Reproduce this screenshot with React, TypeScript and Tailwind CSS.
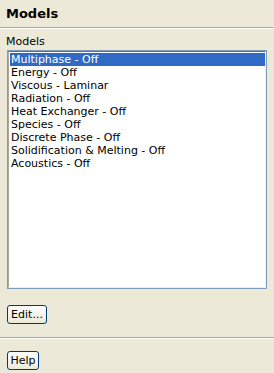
const models = [
  "Multiphase - Off",
  "Energy - Off",
  "Viscous - Laminar",
  "Radiation - Off",
  "Heat Exchanger - Off",
  "Species - Off",
  "Discrete Phase - Off",
  "Solidification & Melting - Off",
  "Acoustics - Off",
];

const XpButton = ({ label, width }: { label: string; width: string }) => (
  <button
    className={`${width} h-[19px] rounded-[3px] border border-[#003c74] bg-gradient-to-b from-white to-[#ece9d8] text-[11px] leading-none text-black`}
  >
    {label}
  </button>
);

export default function App() {
  return (
    <div className="flex h-[373px] w-[274px] flex-col bg-[#ece9d8] font-['Tahoma','DejaVu_Sans',sans-serif] text-black">
      <div className="flex h-[27px] items-center px-[6px] pt-[1px] text-[13px] font-bold">
        Models
      </div>
      <div className="mr-[1px] h-px bg-[#aca899]" />
      <div className="mr-[1px] h-px bg-white" />

      <div className="px-[6px] pt-[6px] text-[11px] leading-[14px]">Models</div>

      <div className="mx-[7px] mt-[1px] h-[239px] border border-[#7f9db9] bg-white">
        <div className="h-full border-t border-l border-t-[#716f64] border-l-[#aca899] border-b border-r border-b-[#f1efe2] border-r-[#f1efe2] pt-[1px] pl-[1px]">
          <ul className="text-[11px] leading-[13px]">
            {models.map((m, i) => (
              <li
                key={m}
                className={
                  i === 0
                    ? "h-[13px] bg-[#316ac5] pl-[1px] text-white"
                    : "h-[13px] pl-[1px]"
                }
              >
                {m}
              </li>
            ))}
          </ul>
        </div>
      </div>

      <div className="px-[7px] pt-[12px]">
        <XpButton label="Edit..." width="w-[40px]" />
      </div>

      <div className="flex-1" />
      <div className="h-px bg-[#aca899]" />
      <div className="h-px bg-white" />
      <div className="px-[7px] pt-[8px] pb-[2px]">
        <XpButton label="Help" width="w-[32px]" />
      </div>
    </div>
  );
}
